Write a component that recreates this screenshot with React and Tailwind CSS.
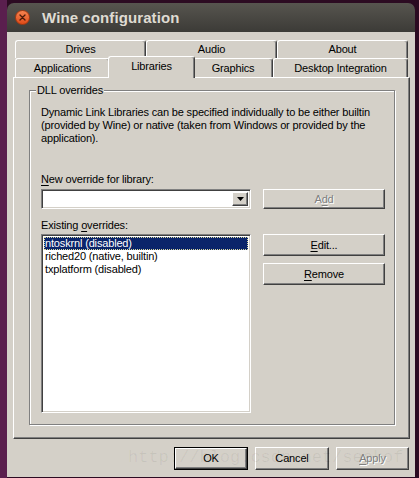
import React from "react";

const raised =
  "border border-t-white border-l-white border-r-[#404040] border-b-[#404040] shadow-[inset_-1px_-1px_0_#808080]";
const sunken =
  "border border-t-[#808080] border-l-[#808080] border-r-white border-b-white shadow-[inset_1px_1px_0_#404040,inset_-1px_-1px_0_#d4d0c8]";

function Tab({ w, children, selected, h = "h-[18px]" }) {
  if (selected) {
    return (
      <div
        className={`${w} -mx-[2px] h-[22px] -mb-[1px] pb-[2px] relative z-10 bg-[#d4d0c8] flex items-center justify-center border-t border-l border-r border-t-white border-l-white border-r-[#404040] rounded-t-[3px] shadow-[inset_-1px_0_0_#808080]`}
      >
        {children}
      </div>
    );
  }
  return (
    <div
      className={`${w} ${h} shrink-0 flex items-center justify-center border-t border-l border-r border-t-white border-l-white border-r-[#404040] rounded-t-[3px] shadow-[inset_-1px_0_0_#808080]`}
    >
      {children}
    </div>
  );
}

function Button({ children, className = "", disabled }) {
  return (
    <div
      className={`${raised} ${className} flex items-center justify-center ${
        disabled ? "text-[#808080] [text-shadow:1px_1px_0_#ffffff]" : "text-black"
      }`}
    >
      {children}
    </div>
  );
}

const U = ({ children }) => <span className="underline underline-offset-[2px]">{children}</span>;

export default function App() {
  return (
    <div className="relative w-[419px] h-[478px] flex bg-[#2c0b22] overflow-hidden font-['Liberation_Sans',Arial,sans-serif] text-[11px] leading-[13px] tracking-[-0.16px] text-black">
      {/* left desktop strip */}
      <div className="w-[7px] h-full bg-[#5a1f4e]" />
      <div className="flex flex-col w-[408px]">
        <div className="h-[3px] bg-[#2c0b22]" />
        {/* window */}
        <div className="flex flex-col h-[474px]">
          {/* title bar */}
          <div className="h-[29px] rounded-t-[7px] bg-gradient-to-b from-[#57554f] to-[#3c3b37] flex items-center">
            <div className="ml-[8px] w-[15px] h-[15px] rounded-full bg-gradient-to-b from-[#f5834f] to-[#df4a16] border border-[#a8380f] flex items-center justify-center">
              <svg width="7" height="7" viewBox="0 0 7 7">
                <path d="M1 1L6 6M6 1L1 6" stroke="#4a1a08" strokeWidth="1.3" strokeLinecap="round" />
              </svg>
            </div>
            <div className="ml-[12px] text-[15px] leading-[17px] tracking-[0.1px] font-bold text-[#dfdbd2]">
              Wine configuration
            </div>
          </div>
          {/* body */}
          <div className="flex-1 bg-[#d4d0c8] pl-[6px] pt-[8px] flex flex-col">
            {/* tabs */}
            <div className="ml-[2px] flex h-[18px]">
              <Tab w="w-[131px]">Drives</Tab>
              <Tab w="w-[131px]">Audio</Tab>
              <Tab w="w-[131px]">About</Tab>
            </div>
            <div className="ml-[2px] flex items-end h-[19px]">
              <Tab w="w-[95px]" h="h-[19px]">Applications</Tab>
              <Tab w="w-[87px]" selected>
                Libraries
              </Tab>
              <Tab w="w-[80px]" h="h-[19px]">Graphics</Tab>
              <Tab w="w-[135px]" h="h-[19px]">Desktop Integration</Tab>
            </div>
            {/* panel */}
            <div className="w-[397px] h-[362px] border border-t-white border-l-white border-r-[#404040] border-b-[#404040] shadow-[inset_-1px_-1px_0_#808080] pl-[15px] pr-[14px] pt-[12px] pb-[13px] flex flex-col">
              <div className="relative flex-1 border border-[#808080] shadow-[1px_1px_0_#ffffff,inset_1px_1px_0_#ffffff] pl-[11px] pt-[15px] flex flex-col">
                <div className="absolute left-[6px] -top-[7px] bg-[#d4d0c8] px-[1px]">DLL overrides</div>
                <div>
                  Dynamic Link Libraries can be specified individually to be either builtin
                  <br />
                  (provided by Wine) or native (taken from Windows or provided by the
                  <br />
                  application).
                </div>
                <div className="mt-[28px]">
                  <U>N</U>ew override for library:
                </div>
                <div className="mt-[3px] flex h-[20px]">
                  <div className={`${sunken} w-[210px] h-[20px] bg-white flex justify-end items-stretch p-[2px]`}>
                    <div className={`${raised} w-[16px] bg-[#d4d0c8] flex items-center justify-center`}>
                      <svg width="7" height="4" viewBox="0 0 7 4">
                        <path d="M0 0H7L3.5 4Z" fill="#000" />
                      </svg>
                    </div>
                  </div>
                  <Button className="ml-[12px] w-[122px] h-[20px]" disabled>
                    A<U>d</U>d
                  </Button>
                </div>
                <div className="mt-[10px]">
                  Existing <U>o</U>verrides:
                </div>
                <div className="mt-[2px] flex">
                  <div className={`${sunken} w-[210px] h-[179px] bg-white p-[2px] flex flex-col`}>
                    <div className="h-[13px] bg-[#0a246a] text-white pl-[1px] outline outline-1 outline-dotted outline-[#d8d8a0] -outline-offset-1 leading-[13px]">
                      ntoskrnl (disabled)
                    </div>
                    <div className="h-[13px] pl-[1px]">riched20 (native, builtin)</div>
                    <div className="h-[13px] pl-[1px]">txplatform (disabled)</div>
                  </div>
                  <div className="ml-[12px] flex flex-col">
                    <Button className="w-[122px] h-[22px]">
                      <U>E</U>dit...
                    </Button>
                    <Button className="mt-[7px] w-[122px] h-[22px]">
                      <U>R</U>emove
                    </Button>
                  </div>
                </div>
              </div>
            </div>
            {/* bottom buttons */}
            <div className="mt-[8px] flex justify-end pr-[6px] gap-[7px]">
              <div className="w-[74px] h-[23px] border border-black flex">
                <Button className="flex-1">OK</Button>
              </div>
              <Button className="w-[74px] h-[23px]">Cancel</Button>
              <Button className="w-[73px] h-[23px]" disabled>
                <U>A</U>pply
              </Button>
            </div>
          </div>
        </div>
        <div className="h-[1px] bg-[#2c0b22]" />
      </div>
      <div className="w-[4px] h-full bg-[#2c0b22]" />
      {/* watermark */}
      <div className="pointer-events-none absolute left-[128px] top-[448px] font-['Liberation_Mono',monospace] text-[17px] leading-[20px] tracking-normal text-black/[0.06]">
        http://blog.csdn.net/seekof
      </div>
    </div>
  );
}
